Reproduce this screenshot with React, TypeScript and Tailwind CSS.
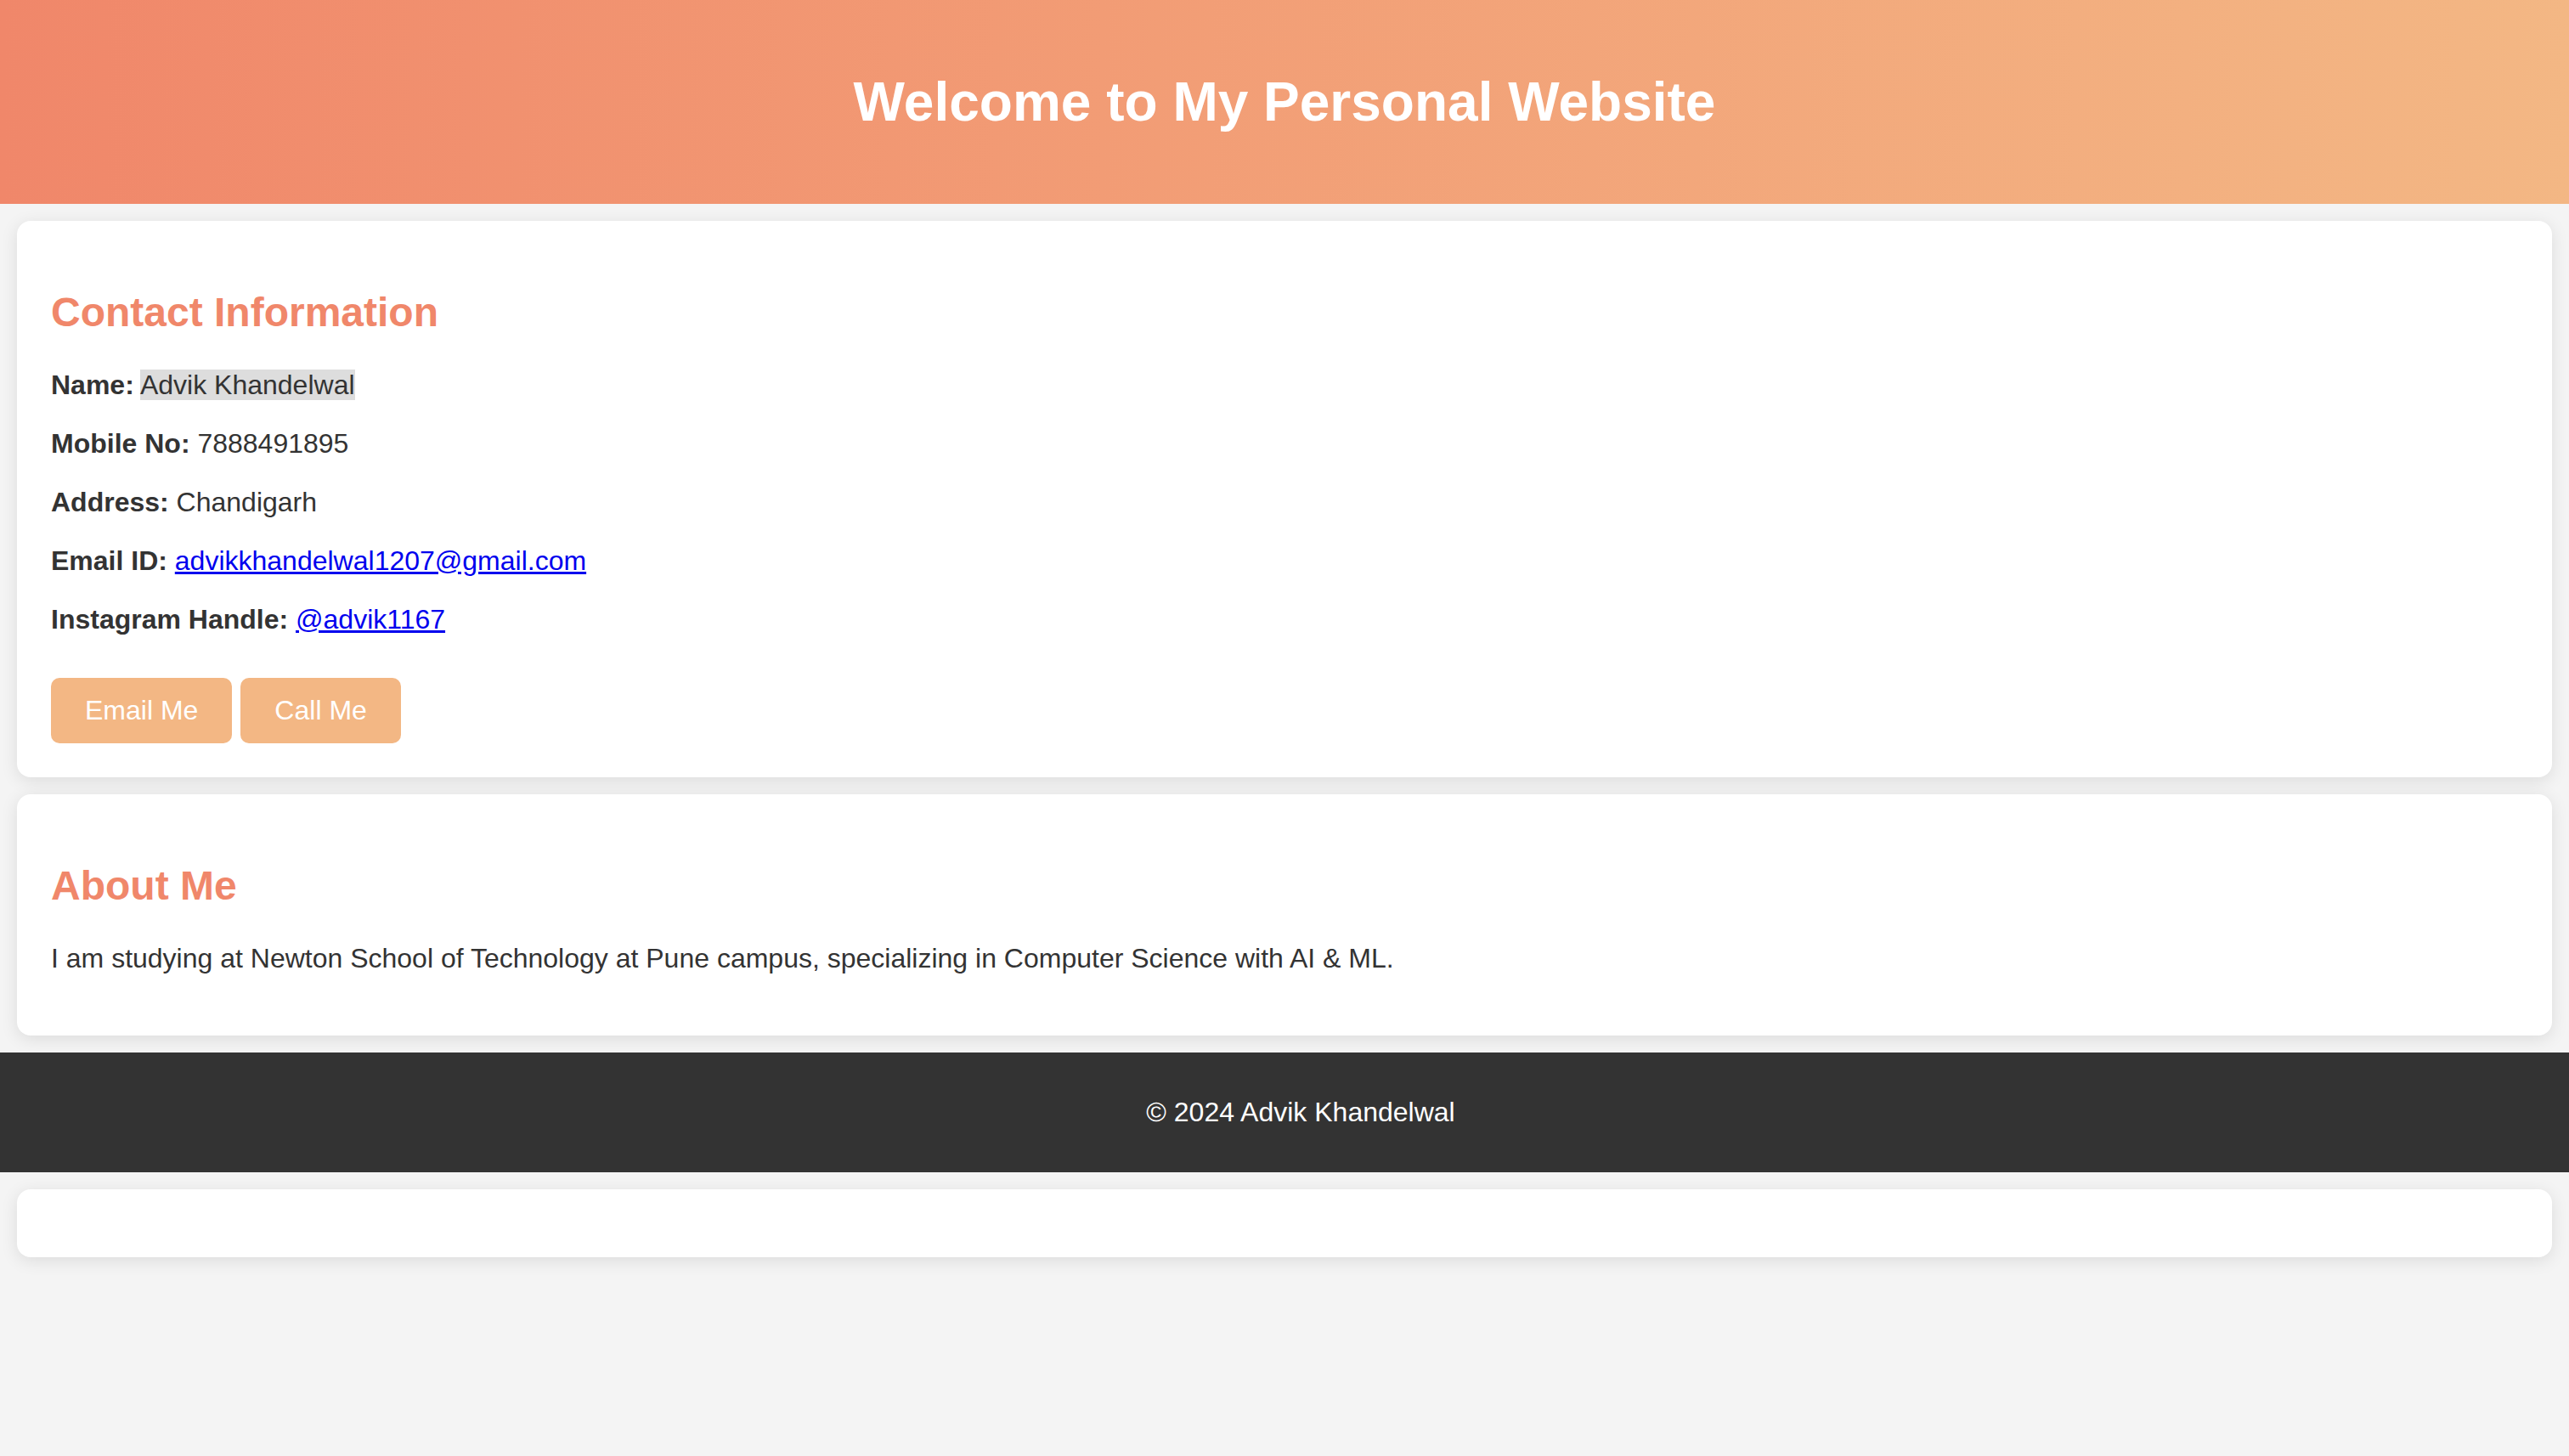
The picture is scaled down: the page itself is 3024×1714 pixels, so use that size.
import React from 'react';

const card =
  'mx-[20px] my-[20px] rounded-[16px] bg-white p-[40px] shadow-[0_4px_20px_rgba(0,0,0,0.1)]';

const Row: React.FC<{ label: string; children: React.ReactNode }> = ({ label, children }) => (
  <p className="my-[32px] leading-[37px]">
    <strong className="font-bold">{label}</strong> {children}
  </p>
);

const App: React.FC = () => {
  return (
    <div className="min-h-screen bg-[#f4f4f4] text-[32px] text-[#333] font-['Liberation_Sans',Arial,sans-serif] flow-root">
      {/* Cabecera con degradado */}
      <header className="bg-gradient-to-r from-[#f0876a] to-[#f3b784] p-[40px] text-center text-white">
        <h1 className="my-[43px] text-[64px] font-bold leading-[74px]">Welcome to My Personal Website</h1>
      </header>

      <main className="flow-root">
        <section className={card}>
          <h2 className="mt-[40px] mb-[40px] text-[48px] font-bold leading-[55px] text-[#f0876a]">
            Contact Information
          </h2>
          <Row label="Name:">
            <span className="bg-[#dddddd]">Advik Khandelwal</span>
          </Row>
          <Row label="Mobile No:">7888491895</Row>
          <Row label="Address:">Chandigarh</Row>
          <Row label="Email ID:">
            <a href="#" className="text-[#0000ee] underline">advikkhandelwal1207@gmail.com</a>
          </Row>
          <Row label="Instagram Handle:">
            <a href="#" className="text-[#0000ee] underline">@advik1167</a>
          </Row>
          <div className="flex gap-[10px] pt-[18px]">
            <button className="h-[77px] rounded-[10px] bg-[#f3b784] px-[40px] leading-[37px] text-white">
              Email Me
            </button>
            <button className="h-[77px] rounded-[10px] bg-[#f3b784] px-[40px] leading-[37px] text-white">
              Call Me
            </button>
          </div>
        </section>

        <section className={card}>
          <h2 className="mt-[40px] mb-[40px] text-[48px] font-bold leading-[55px] text-[#f0876a]">About Me</h2>
          <p className="mb-[32px] leading-[37px]">
            I am studying at Newton School of Technology at Pune campus, specializing in Computer Science with AI &amp; ML.
          </p>
        </section>
      </main>

      <footer className="bg-[#333] py-[20px] pl-[58px] pr-[20px] text-center text-white">
        <p className="my-[32px] leading-[37px]">© 2024 Advik Khandelwal</p>
      </footer>

      <section className={card + ' h-[80px]'}></section>
    </div>
  );
};

export default App;
